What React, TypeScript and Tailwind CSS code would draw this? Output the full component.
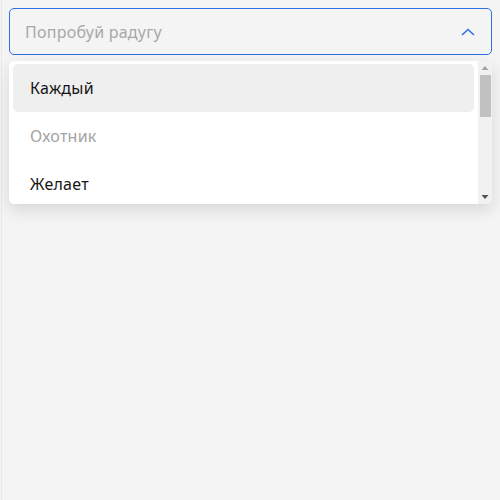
import React, { useState } from 'react';

const options = ['Каждый', 'Охотник', 'Желает', 'Знать', 'Где', 'Сидит', 'Фазан', 'Радуга'];
const disabled = ['Охотник'];

const ChevronUp: React.FC = () => (
  <svg width="14" height="8" viewBox="0 0 14 8" fill="none" className="shrink-0">
    <path d="M1 7L7 1.5L13 7" stroke="#2f6fe4" strokeWidth="1.6" />
  </svg>
);

// classic scrollbar look, drawn by hand since headless hides the native one
const Scrollbar: React.FC = () => (
  <div className="w-[14px] shrink-0 bg-[#f1f1f1] flex flex-col items-center">
    <svg width="8" height="14" viewBox="0 0 8 14" className="shrink-0">
      <path d="M0.5 9H7.5L4 5Z" fill="#a3a3a3" />
    </svg>
    <div className="w-[11px] h-[42px] bg-[#c1c1c1]" />
    <div className="flex-1" />
    <svg width="8" height="14" viewBox="0 0 8 14" className="shrink-0">
      <path d="M0.5 5H7.5L4 9Z" fill="#505050" />
    </svg>
  </div>
);

const App: React.FC = () => {
  const [active, setActive] = useState<number>(0);

  return (
    <div className="min-h-screen bg-[#f4f4f4] font-['Noto_Sans',sans-serif] tracking-[0.25px]">
      <div className="min-h-screen ml-px border-l border-[#e9e9e9] pt-2 pl-[7px] pr-2">
        <div className="h-[47px] rounded-[5px] border border-[#2f6fe4] flex items-center justify-between pl-[15px] pr-[16px]">
          <span className="text-[16px] text-[#a8a8a8]">Попробуй радугу</span>
          <ChevronUp />
        </div>
        <div className="mt-[6px] h-[143px] bg-white rounded-[5px] shadow-[0_6px_16px_rgba(0,0,0,0.12)] flex overflow-hidden">
          <div className="flex-1 overflow-y-auto [scrollbar-width:none] px-1 py-[3px]">
            {options.map((opt, i) => {
              const isDisabled = disabled.includes(opt);
              return (
                <div
                  key={opt}
                  onMouseEnter={() => !isDisabled && setActive(i)}
                  className={`h-12 flex items-center pl-[17px] rounded-[5px] text-[16px] ${
                    isDisabled ? 'text-[#a3a3a3]' : 'text-[#161616]'
                  } ${active === i ? 'bg-[#efefef]' : ''}`}
                >
                  {opt}
                </div>
              );
            })}
          </div>
          <Scrollbar />
        </div>
      </div>
    </div>
  );
};

export default App;
